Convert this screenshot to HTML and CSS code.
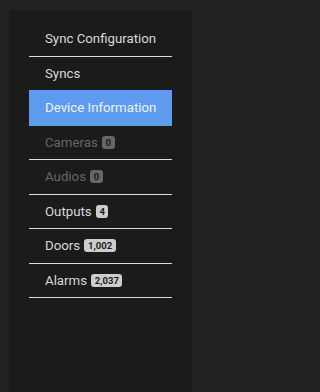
FILE: index.html
```html
<!DOCTYPE html>
<html>
<head>
<meta charset="utf-8">
<link rel="stylesheet" href="styles.css">
</head>
<body>
<div class="panel">
  <ul class="menu">
    <li class="item">Sync Configuration</li>
    <li class="item">Syncs</li>
    <li class="item active">Device Information</li>
    <li class="item disabled">Cameras <span class="badge">0</span></li>
    <li class="item disabled">Audios <span class="badge">0</span></li>
    <li class="item">Outputs <span class="badge">4</span></li>
    <li class="item">Doors <span class="badge">1,002</span></li>
    <li class="item">Alarms <span class="badge">2,037</span></li>
  </ul>
</div>
</body>
</html>
```
FILE: styles.css
```css
html, body {
  margin: 0;
  padding: 0;
  background: #222222;
  height: 100%;
  overflow: hidden;
}
body {
  font-family: Roboto, "Liberation Sans", sans-serif;
}
.panel {
  margin: 10px 0 0 9px;
  width: 183px;
  height: 382px;
  background: #1b1b1b;
  padding: 12px 0 0 20px;
  box-sizing: border-box;
}
.menu {
  list-style: none;
  margin: 0;
  padding: 0;
  width: 143px;
}
.item {
  padding: 8px 16px;
  font-size: 13.25px;
  line-height: 17.5px;
  color: #d9d9d9;
  border-bottom: 1px solid #dcdcdc;
  white-space: nowrap;
}
.item.active {
  background: #5e9bef;
  color: #f0f4fc;
  margin-top: -1px;
  border-top: 1px solid #5e9bef;
  border-bottom-color: #5e9bef;
}
.item.disabled {
  color: #666666;
}
.badge {
  display: inline-block;
  font-size: 9.5px;
  font-weight: 700;
  line-height: 13px;
  padding: 0 3.5px;
  border-radius: 3px;
  background: #cdcdcd;
  color: #1b1b1b;
  vertical-align: 1px;
  margin-left: 1px;
}
.disabled .badge {
  background: #666666;
  color: #1b1b1b;
}
```
